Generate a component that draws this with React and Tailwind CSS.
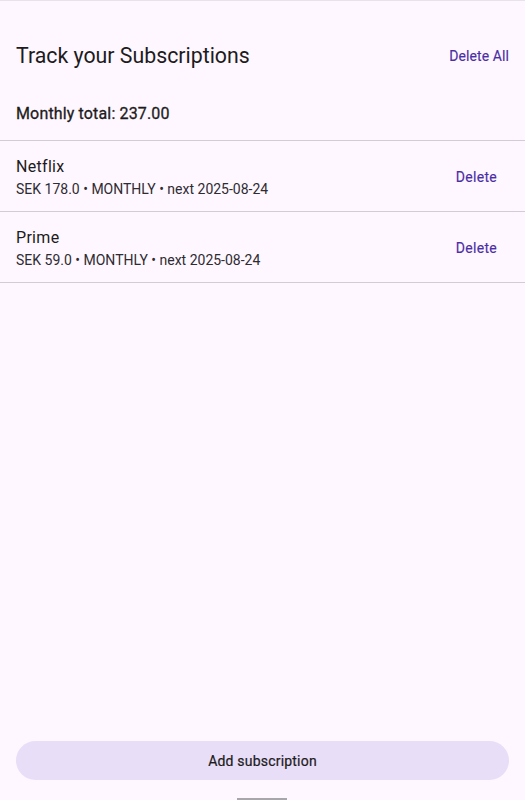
import React from "react";

const subs = [
  { id: 1, name: "Netflix", price: "178.0", period: "MONTHLY", next: "2025-08-24" },
  { id: 2, name: "Prime", price: "59.0", period: "MONTHLY", next: "2025-08-24" },
];

function Divider() {
  return <div className="h-px bg-[#d3ccd7]" />;
}

function SubRow({ sub }) {
  return (
    <>
      <div className="flex items-center justify-between pl-4 pr-[28px] pt-[14px] pb-[12px]">
        <div className="min-w-0">
          <p className="text-base leading-6 text-[#1d1b20] tracking-[0.3px]">{sub.name}</p>
          <p className="text-sm leading-5 text-[#2e2b32]">
            SEK {sub.price} • {sub.period} • next {sub.next}
          </p>
        </div>
        <button className="text-sm text-[#4a2ea5] tracking-[0.3px] [-webkit-text-stroke:0.15px_#4a2ea5]">
          Delete
        </button>
      </div>
      <Divider />
    </>
  );
}

export default function App() {
  return (
    <div
      className="relative h-[800px] w-full flex flex-col bg-[#fef7ff] border-t border-[#e8e2ea]"
      style={{ fontFamily: "Roboto, 'Noto Sans', sans-serif" }}
    >
      {/* Header */}
      <div className="flex items-center justify-between pl-4 pr-4 pt-[41px]">
        <h1 className="text-[21.3px] leading-7 text-[#1d1b20]">Track your Subscriptions</h1>
        <button className="text-sm text-[#4a2ea5] tracking-[0.1px] [-webkit-text-stroke:0.15px_#4a2ea5]">
          Delete All
        </button>
      </div>

      <p className="px-4 mt-[32px] mb-[14px] text-base leading-6 text-[#1d1b20] tracking-[0.15px] [-webkit-text-stroke:0.3px_#1d1b20]">
        Monthly total: 237.00
      </p>

      <Divider />

      <div className="flex-1">
        {subs.map((s) => (
          <SubRow key={s.id} sub={s} />
        ))}
      </div>

      <div className="px-4 mb-[20px]">
        <button className="w-full h-[39px] rounded-full bg-[#e8def8] text-sm text-[#1d1b20] tracking-[0.2px] [-webkit-text-stroke:0.2px_#1d1b20]">
          Add subscription
        </button>
      </div>

      {/* nav handle */}
      <div className="absolute bottom-0 left-[237px] w-[50px] h-[2px] bg-[#a9a6ab]" />
    </div>
  );
}
